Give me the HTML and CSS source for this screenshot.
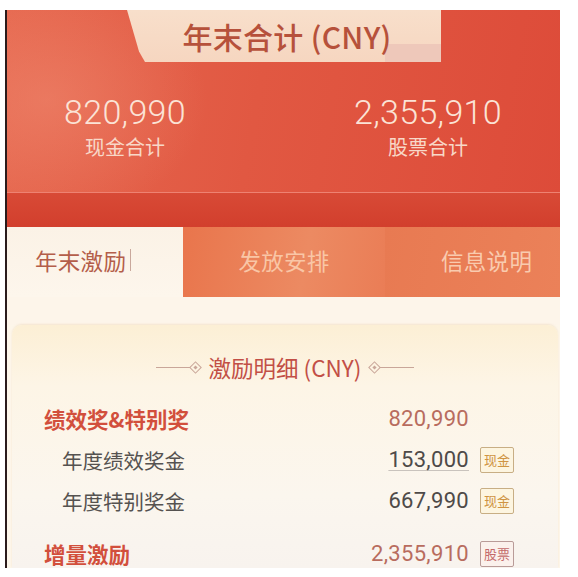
FILE: index.html
```html
<!DOCTYPE html>
<html lang="zh">
<head>
<meta charset="utf-8">
<link rel="stylesheet" href="styles.css">
</head>
<body>
<div class="frame">
  <header class="summary">
    <div class="title-tab"><span>年末合计 (CNY)</span></div>
    <div class="totals">
      <div class="total"><div class="num">820,990</div><div class="lbl">现金合计</div></div>
      <div class="total"><div class="num">2,355,910</div><div class="lbl">股票合计</div></div>
    </div>
    <div class="strip"></div>
  </header>
  <nav class="tabs">
    <div class="tab active">年末激励<i class="caret"></i></div>
    <div class="tab t2">发放安排</div>
    <div class="tab t3">信息说明</div>
  </nav>
  <div class="spacer"></div>
  <section class="card">
    <div class="sec-title">
      <span class="deco left"><b></b><em></em></span>
      <span class="sec-text">激励明细 (CNY)</span>
      <span class="deco right"><em></em><b></b></span>
    </div>
    <div class="row group">
      <span class="name">绩效奖&amp;特别奖</span>
      <span class="val">820,990</span>
      <span class="badge none"></span>
    </div>
    <div class="row sub">
      <span class="name">年度绩效奖金</span>
      <span class="val ul">153,000</span>
      <span class="badge cash">现金</span>
    </div>
    <div class="row sub">
      <span class="name">年度特别奖金</span>
      <span class="val">667,990</span>
      <span class="badge cash">现金</span>
    </div>
    <div class="row group last">
      <span class="name">增量激励</span>
      <span class="val">2,355,910</span>
      <span class="badge stock">股票</span>
    </div>
  </section>
</div>
</body>
</html>
```
FILE: styles.css
```css
* { box-sizing: border-box; }
html, body { margin: 0; padding: 0; background: #ffffff; }
body {
  font-family: "Noto Sans CJK SC", "Noto Sans", Roboto, sans-serif;
}
.frame {
  margin: 10px 0 0 5px;
  width: 555px;
  height: 558px;
  border-left: 2px solid #2a1b1b;
  background: #fdf6ea;
  overflow: hidden;
  display: flex;
  flex-direction: column;
}
.summary {
  flex-shrink: 0;
  height: 217px;
  display: flex;
  flex-direction: column;
  background:
    radial-gradient(ellipse 160px 120px at 40px 90px, rgba(240,140,115,0.5), rgba(240,140,115,0) 100%),
    linear-gradient(100deg, #e6684f 0%, #e15842 45%, #dd4b39 100%);
}
.title-tab {
  position: relative;
  flex-shrink: 0;
  margin-left: 120px;
  width: 314px;
  height: 52px;
  background: linear-gradient(180deg, #f8dfcb 0%, #f6d6c0 100%);
  clip-path: polygon(0 0, 100% 0, 100% 100%, 18px 100%, 12px 80%, 6px 40%);
  display: flex;
  align-items: center;
  justify-content: center;
  padding-left: 6px;
}
.title-tab span {
  position: relative;
  z-index: 1;
  font-size: 30px;
  font-weight: 500;
  color: #b6513b;
  letter-spacing: 0.3px;
}
.title-tab::after {
  content: "";
  position: absolute;
  right: 0;
  bottom: 0;
  width: 56px;
  height: 18px;
  background: #eec8ba;
}
.totals {
  flex: 1;
  display: grid;
  grid-template-columns: 236px 236px;
  column-gap: 67px;
  padding-top: 32px;
}
.total {
  display: flex;
  flex-direction: column;
  align-items: center;
}
.num {
  font-family: Roboto, "Liberation Sans", sans-serif;
  font-weight: 300;
  font-size: 34px;
  line-height: 36px;
  color: #fbe3d6;
  letter-spacing: 0.3px;
}
.lbl {
  font-size: 20px;
  line-height: 26px;
  color: #f8d8c8;
  margin-top: 4px;
}
.strip {
  flex-shrink: 0;
  height: 35px;
  border-top: 1.5px solid #ee8272;
  background: linear-gradient(180deg, #d84a36 0%, #d23f2d 100%);
}
.tabs {
  flex-shrink: 0;
  display: grid;
  grid-template-columns: 176px 202px 175px;
  height: 70px;
}
.tab {
  display: flex;
  align-items: center;
  font-size: 22.5px;
  letter-spacing: 0.3px;
}
.tab.active {
  background: linear-gradient(180deg, #fbf2e6 0%, #fdf6ec 100%);
  color: #b45e4a;
  padding-left: 28px;
  padding-bottom: 4px;
}
.caret {
  display: inline-block;
  width: 1px;
  height: 22px;
  background: #c9a89c;
  margin-left: 4px;
}
.tab.t2 {
  background: linear-gradient(100deg, #e9754c 0%, #ec8a62 60%, #ea7d56 100%);
  color: #f9c6a6;
  justify-content: center;
  padding-bottom: 4px;
}
.tab.t3 {
  background: linear-gradient(100deg, #e87a52 0%, #eb8159 100%);
  color: #f9cbaf;
  padding-left: 56px;
  padding-bottom: 4px;
}
.spacer {
  flex-shrink: 0;
  height: 28px;
  background: #fdf5ea;
}
.card {
  flex: 1;
  min-height: 0;
  margin: 0 2px 0 5px;
  border-radius: 10px 10px 0 0;
  background: linear-gradient(180deg, #fcefd5 0%, #fdf5e6 25%, #fbf6ee 70%, #f8f3ee 100%);
  box-shadow: 0 -1px 2px rgba(230,200,160,0.35);
  padding-top: 28px;
}
.sec-title {
  display: flex;
  align-items: center;
  justify-content: center;
  height: 28px;
  margin-bottom: 17px;
  margin-left: 0;
}
.sec-text {
  font-size: 22.5px;
  color: #c24f46;
  margin: 0 8px;
}
.deco {
  display: flex;
  align-items: center;
}
.deco b {
  display: block;
  width: 34px;
  height: 1px;
  background: #c9a699;
}
.deco em {
  display: block;
  width: 9px;
  height: 9px;
  border: 1px solid #c9a699;
  transform: rotate(45deg);
  position: relative;
  margin: 0 1px;
}
.deco em::after {
  content: "";
  position: absolute;
  left: 2px;
  top: 2px;
  width: 3px;
  height: 3px;
  background: #c9a699;
}
.row {
  display: flex;
  align-items: center;
  height: 41px;
  padding-left: 32px;
}
.row .name {
  flex: 1;
  font-size: 20.5px;
}
.row.group .name {
  color: #d24f3c;
  font-weight: 700;
  font-size: 21.5px;
}
.row.sub .name {
  color: #555250;
  padding-left: 18px;
}
.row.last { margin-top: 12px; }
.val {
  font-family: Roboto, "Liberation Sans", sans-serif;
  font-size: 22px;
  letter-spacing: 0.3px;
}
.row.group .val { color: #b86c5e; }
.row.sub .val { color: #4e4a48; }
.val.ul { text-decoration: underline; text-decoration-color: #c9c3bd; text-underline-offset: 3px; text-decoration-thickness: 1px; }
.badge {
  width: 34px;
  height: 26px;
  margin: 0 44px 0 11px;
  display: flex;
  align-items: center;
  justify-content: center;
  font-size: 13px;
  border: 1.5px solid #c8ae84;
  background: #fdf5e0;
  color: #cf9442;
  border-radius: 2px;
}
.badge.none { border-color: transparent; background: transparent; }
.badge.stock { border-color: #b99b98; color: #c46a6a; background: #fbf1ec; }
```
